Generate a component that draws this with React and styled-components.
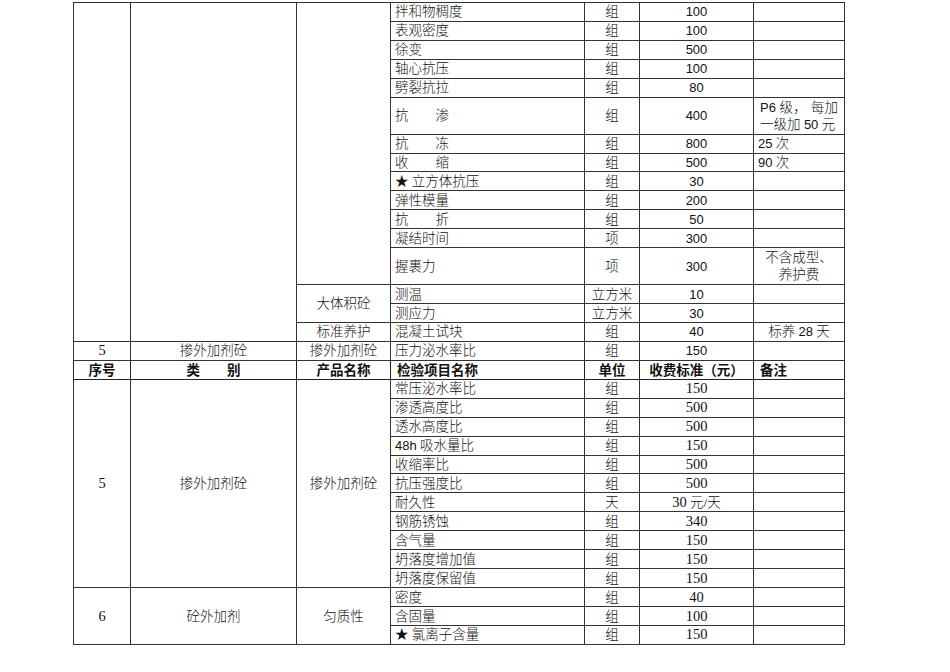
import React from "react";
import styled, { createGlobalStyle } from "styled-components";

const Global = createGlobalStyle`
  html, body { margin: 0; padding: 0; background: #fff; }
  body { font-family: "Liberation Serif", "Noto Sans CJK SC", serif; color: #111; }
`;

const Page = styled.div`
  padding: 2px 0 0 73px;
`;

const Sheet = styled.table`
  border-collapse: collapse;
  table-layout: fixed;
  width: 771px;
  font-size: 13.5px;
  font-weight: 300;
  font-family: "Liberation Serif", "Noto Sans CJK SC", serif;
`;

const Row = styled.tr`
  height: ${(p) => (p.$tall ? "36.9px" : "18.95px")};
`;

const Cell = styled.td`
  border: 1px solid #333;
  padding: 0 ${(p) => (p.$align === "left" ? "4px" : "2px")};
  text-align: ${(p) => p.$align || "center"};
  vertical-align: middle;
  line-height: 17px;
  white-space: nowrap;
  overflow: hidden;
`;

const Head = styled.th`
  border: 1px solid #222;
  padding: 0 ${(p) => (p.$align === "left" ? "6px" : "2px")};
  text-align: ${(p) => p.$align || "center"};
  font-family: "Noto Sans CJK SC", sans-serif;
  font-weight: 700;
  font-size: 13.5px;
  line-height: 17px;
  white-space: nowrap;
`;

const Num = styled.span`
  font-family: ${(p) =>
    p.$sans ? '"Liberation Sans", "Noto Sans CJK SC", sans-serif' : '"Liberation Serif", "Noto Sans CJK SC", serif'};
  font-size: ${(p) => (p.$sans ? "13px" : "14.5px")};
  font-weight: 400;
`;

const NoteLines = styled.div`
  line-height: 17px;
  white-space: normal;
  padding-left: 2px;
`;

const JustLine = styled.div`
  text-align: justify;
  text-align-last: justify;
  padding-right: 2px;
`;

const CenterNote = styled.div`
  text-align: center;
  line-height: 17px;
  white-space: normal;
`;

const upper = [
  { item: "拌和物稠度", unit: "组", price: "100" },
  { item: "表观密度", unit: "组", price: "100" },
  { item: "徐变", unit: "组", price: "500" },
  { item: "轴心抗压", unit: "组", price: "100" },
  { item: "劈裂抗拉", unit: "组", price: "80" },
  {
    item: "抗　　渗",
    unit: "组",
    price: "400",
    tall: true,
    noteLeft: true,
    note: (
      <NoteLines>
        <JustLine>
          <Num $sans>P6</Num> 级， 每加
        </JustLine>
        <div>
          一级加 <Num $sans>50</Num> 元
        </div>
      </NoteLines>
    ),
  },
  { item: "抗　　冻", unit: "组", price: "800", note: <><Num $sans>25</Num> 次</>, noteLeft: true },
  { item: "收　　缩", unit: "组", price: "500", note: <><Num $sans>90</Num> 次</>, noteLeft: true },
  { item: "★ 立方体抗压", unit: "组", price: "30" },
  { item: "弹性模量", unit: "组", price: "200" },
  { item: "抗　　折", unit: "组", price: "50" },
  { item: "凝结时间", unit: "项", price: "300" },
  {
    item: "握裹力",
    unit: "项",
    price: "300",
    tall: true,
    note: (
      <CenterNote>
        不含成型、
        <br />
        养护费
      </CenterNote>
    ),
  },
  { item: "测温", unit: "立方米", price: "10" },
  { item: "测应力", unit: "立方米", price: "30" },
  { item: "混凝土试块", unit: "组", price: "40", note: <>标养 <Num $sans>28</Num> 天</> },
];

const admixture = [
  { item: "常压泌水率比", unit: "组", price: "150" },
  { item: "渗透高度比", unit: "组", price: "500" },
  { item: "透水高度比", unit: "组", price: "500" },
  { item: <><Num $sans>48h</Num> 吸水量比</>, unit: "组", price: "150" },
  { item: "收缩率比", unit: "组", price: "500" },
  { item: "抗压强度比", unit: "组", price: "500" },
  { item: "耐久性", unit: "天", price: "30", suffix: " 元/天" },
  { item: "钢筋锈蚀", unit: "组", price: "340" },
  { item: "含气量", unit: "组", price: "150" },
  { item: "坍落度增加值", unit: "组", price: "150" },
  { item: "坍落度保留值", unit: "组", price: "150" },
];

const additive = [
  { item: "密度", unit: "组", price: "40" },
  { item: "含固量", unit: "组", price: "100" },
  { item: "★ 氯离子含量", unit: "组", price: "150" },
];

function upperLead(i) {
  if (i === 0)
    return (
      <>
        <Cell rowSpan={16} />
        <Cell rowSpan={16} />
        <Cell rowSpan={13} />
      </>
    );
  if (i === 13) return <Cell rowSpan={2}>大体积砼</Cell>;
  if (i === 15) return <Cell>标准养护</Cell>;
  return null;
}

export default function App() {
  return (
    <Page>
      <Global />
      <Sheet>
        <colgroup>
          <col style={{ width: 57 }} />
          <col style={{ width: 166 }} />
          <col style={{ width: 94 }} />
          <col style={{ width: 194 }} />
          <col style={{ width: 55 }} />
          <col style={{ width: 114 }} />
          <col style={{ width: 91 }} />
        </colgroup>
        <tbody>
          {upper.map((r, i) => (
            <Row key={"u" + i} $tall={r.tall}>
              {upperLead(i)}
              <Cell $align="left">{r.item}</Cell>
              <Cell>{r.unit}</Cell>
              <Cell>
                <Num $sans>{r.price}</Num>
              </Cell>
              <Cell $align={r.noteLeft ? "left" : "center"}>{r.note}</Cell>
            </Row>
          ))}
          <Row>
            <Cell>
              <Num>5</Num>
            </Cell>
            <Cell>掺外加剂砼</Cell>
            <Cell>掺外加剂砼</Cell>
            <Cell $align="left">压力泌水率比</Cell>
            <Cell>组</Cell>
            <Cell>
              <Num $sans>150</Num>
            </Cell>
            <Cell />
          </Row>
          <Row>
            <Head>序号</Head>
            <Head>类　　别</Head>
            <Head>产品名称</Head>
            <Head $align="left">检验项目名称</Head>
            <Head>单位</Head>
            <Head>收费标准（元）</Head>
            <Head $align="left">备注</Head>
          </Row>
          {admixture.map((r, i) => (
            <Row key={"a" + i}>
              {i === 0 && (
                <>
                  <Cell rowSpan={11}>
                    <Num>5</Num>
                  </Cell>
                  <Cell rowSpan={11}>掺外加剂砼</Cell>
                  <Cell rowSpan={11}>掺外加剂砼</Cell>
                </>
              )}
              <Cell $align="left">{r.item}</Cell>
              <Cell>{r.unit}</Cell>
              <Cell>
                <Num>{r.price}</Num>
                {r.suffix}
              </Cell>
              <Cell />
            </Row>
          ))}
          {additive.map((r, i) => (
            <Row key={"d" + i}>
              {i === 0 && (
                <>
                  <Cell rowSpan={3}>
                    <Num>6</Num>
                  </Cell>
                  <Cell rowSpan={3}>砼外加剂</Cell>
                  <Cell rowSpan={3}>匀质性</Cell>
                </>
              )}
              <Cell $align="left">{r.item}</Cell>
              <Cell>{r.unit}</Cell>
              <Cell>
                <Num>{r.price}</Num>
              </Cell>
              <Cell />
            </Row>
          ))}
        </tbody>
      </Sheet>
    </Page>
  );
}
